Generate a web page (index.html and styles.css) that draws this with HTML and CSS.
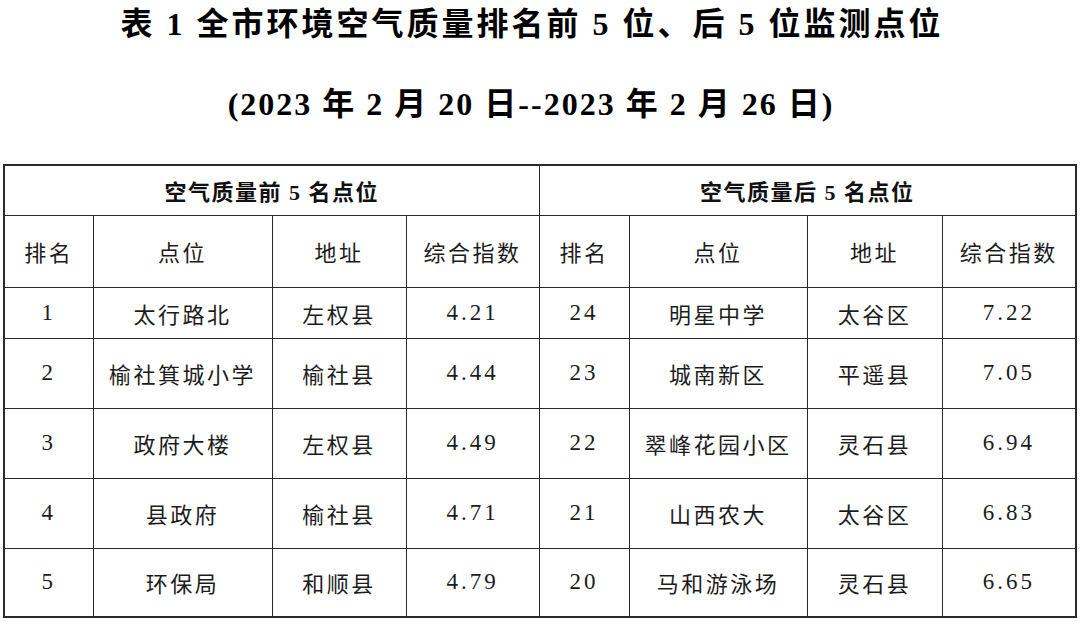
FILE: index.html
```html
<!DOCTYPE html>
<html lang="zh-CN">
<head>
<meta charset="utf-8">
<title>表1 全市环境空气质量排名</title>
<link rel="stylesheet" href="styles.css">
</head>
<body>
<div class="page">
  <h1 class="title">表 1 全市环境空气质量排名前 5 位、后 5 位监测点位</h1>
  <p class="subtitle">(2023 年 2 月 20 日--2023 年 2 月 26 日)</p>
  <table class="rank">
    <colgroup>
      <col class="c-rank"><col class="c-site"><col class="c-addr"><col class="c-idx">
      <col class="c-rank2"><col class="c-site2"><col class="c-addr2"><col class="c-idx2">
    </colgroup>
    <tr class="r-group">
      <th colspan="4">空气质量前 5 名点位</th>
      <th colspan="4">空气质量后 5 名点位</th>
    </tr>
    <tr class="r-head">
      <td>排名</td><td>点位</td><td>地址</td><td>综合指数</td>
      <td>排名</td><td>点位</td><td>地址</td><td>综合指数</td>
    </tr>
    <tr class="r-first">
      <td class="num">1</td><td>太行路北</td><td>左权县</td><td class="num">4.21</td>
      <td class="num">24</td><td>明星中学</td><td>太谷区</td><td class="num">7.22</td>
    </tr>
    <tr class="r-data">
      <td class="num">2</td><td>榆社箕城小学</td><td>榆社县</td><td class="num">4.44</td>
      <td class="num">23</td><td>城南新区</td><td>平遥县</td><td class="num">7.05</td>
    </tr>
    <tr class="r-data">
      <td class="num">3</td><td>政府大楼</td><td>左权县</td><td class="num">4.49</td>
      <td class="num">22</td><td>翠峰花园小区</td><td>灵石县</td><td class="num">6.94</td>
    </tr>
    <tr class="r-data">
      <td class="num">4</td><td>县政府</td><td>榆社县</td><td class="num">4.71</td>
      <td class="num">21</td><td>山西农大</td><td>太谷区</td><td class="num">6.83</td>
    </tr>
    <tr class="r-last">
      <td class="num">5</td><td>环保局</td><td>和顺县</td><td class="num">4.79</td>
      <td class="num">20</td><td>马和游泳场</td><td>灵石县</td><td class="num">6.65</td>
    </tr>
  </table>
</div>
</body>
</html>
```

FILE: styles.css
```css
html, body {
  margin: 0;
  padding: 0;
  background: #ffffff;
}

.page {
  width: 1080px;
  height: 627px;
  overflow: hidden;
  font-family: "Liberation Serif", "Noto Sans CJK SC", serif;
  color: #111;
}

.title {
  margin: 0;
  height: 48px;
  line-height: 48px;
  font-size: 32px;
  font-weight: 700;
  letter-spacing: 3px;
  text-align: center;
  padding-right: 16px;
  color: #000;
}

.subtitle {
  margin: 32px 0 0;
  height: 48px;
  line-height: 48px;
  font-size: 32px;
  font-weight: 700;
  letter-spacing: 2px;
  text-align: center;
  padding-right: 18px;
  color: #000;
}

.rank {
  margin: 36px 0 0 3px;
  width: 1074px;
  table-layout: fixed;
  border-collapse: collapse;
  border: 2px solid #2a2a2a;
}

.c-rank { width: 89px; }
.c-site { width: 179px; }
.c-addr { width: 134px; }
.c-idx { width: 133px; }
.c-rank2 { width: 90px; }
.c-site2 { width: 178px; }
.c-addr2 { width: 135px; }
.c-idx2 { width: 134px; }

.rank th,
.rank td {
  border: 1px solid #2a2a2a;
  padding: 0;
  text-align: center;
  vertical-align: middle;
  font-size: 22px;
  letter-spacing: 2.5px;
  color: #1c1c1c;
  white-space: nowrap;
}

.rank th {
  font-weight: 700;
  letter-spacing: 1.5px;
  color: #111;
}

.rank td {
  font-weight: 400;
}

.rank .num {
  font-size: 23px;
  letter-spacing: 3px;
}

.r-group { height: 50px; }
.r-head { height: 72px; }
.r-first { height: 51px; }
.r-data { height: 70px; }
.r-last { height: 69px; }
```
